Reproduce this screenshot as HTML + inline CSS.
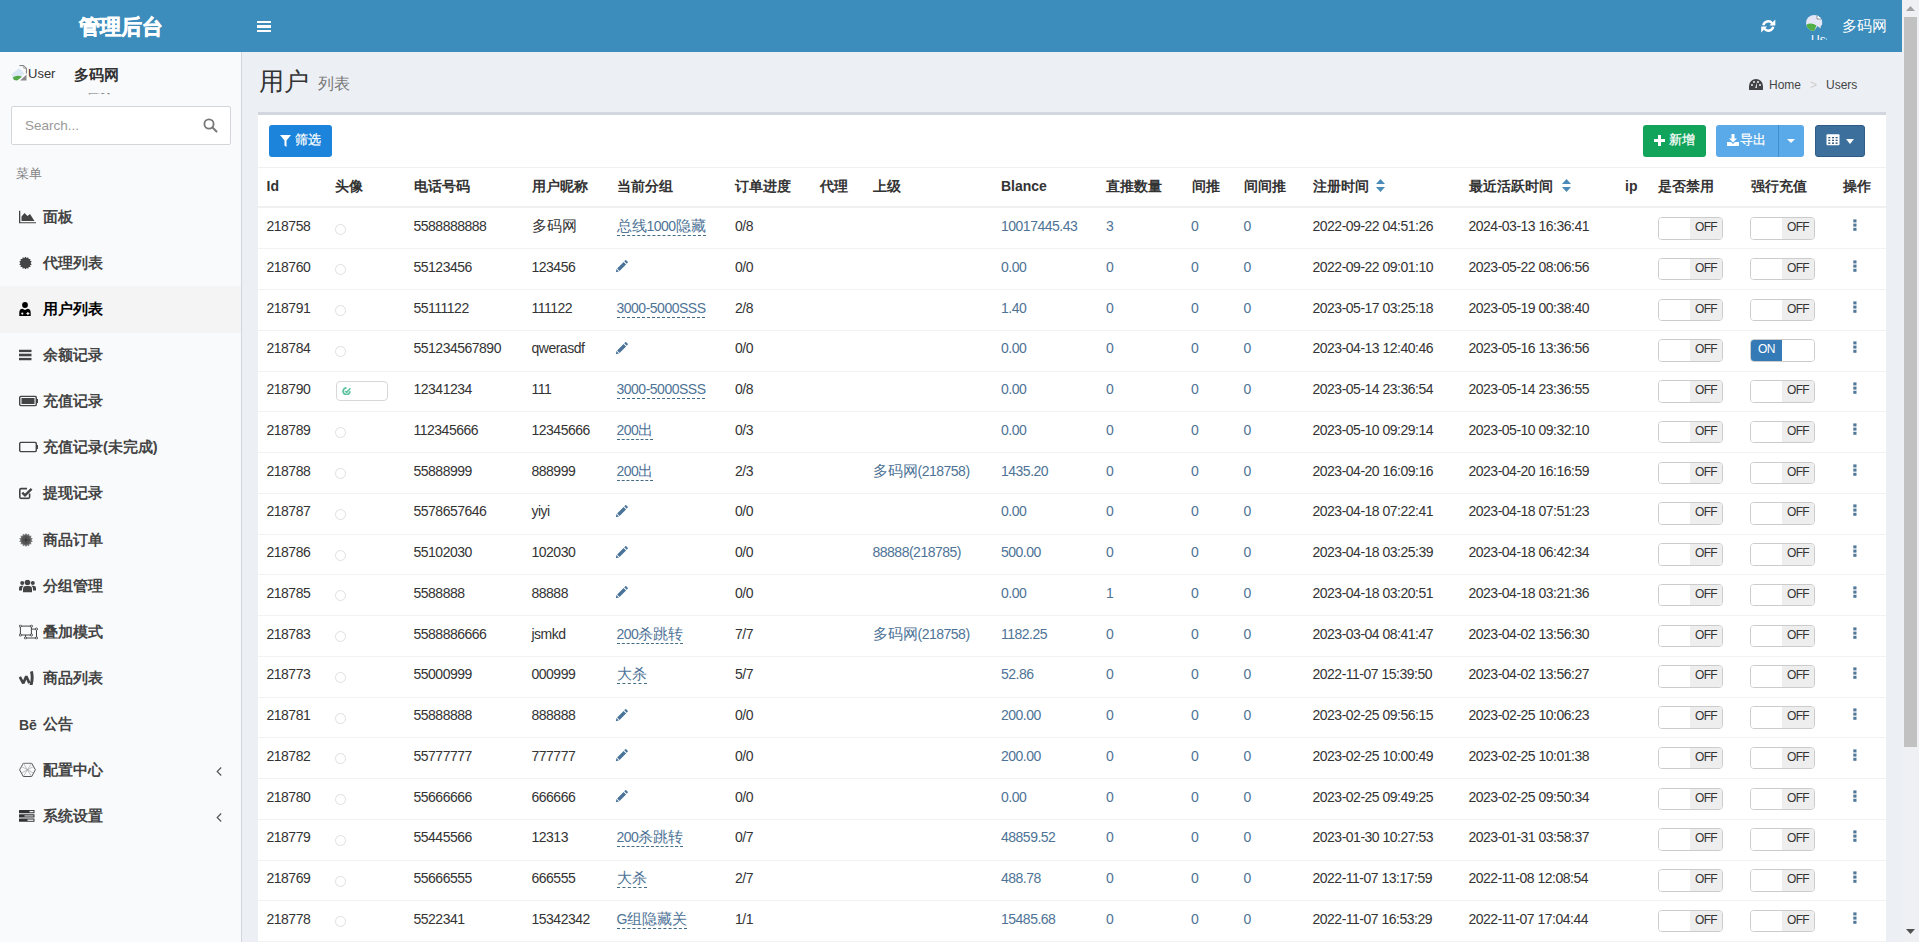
<!DOCTYPE html>
<html><head><meta charset="utf-8"><title>用户列表</title>
<style>
*{box-sizing:border-box;margin:0;padding:0}
html,body{width:1919px;height:942px;overflow:hidden}
body{position:relative;background:#ecf0f5;font-family:"Liberation Sans",sans-serif;color:#333;font-size:13px}
.abs,.t,.th,.mi,.micon,.mtxt,.sw,.dots,.avc,.avb,.rb,.sort,.marr,.mact{position:absolute}
#hdr{position:absolute;left:0;top:0;width:1902px;height:52px;background:#3c8dbc}
#logo{position:absolute;left:79px;top:13px;font-size:21px;font-weight:bold;color:#fff;letter-spacing:0px;line-height:28px;-webkit-text-stroke:0.6px #fff}
#burger{position:absolute;left:257px;top:21px;width:14px;height:11px}
#burger i{display:block;height:2.2px;background:#fff;margin-bottom:2.2px}
#refresh{position:absolute;left:1761px;top:18.5px;line-height:0}
#uimg{position:absolute;left:1805.5px;top:14.5px;width:17px;height:16px;line-height:0}
#uname{position:absolute;left:1842px;top:17px;font-size:14.5px;color:#fff;line-height:18px}
#sb{position:absolute;left:1902px;top:0;width:17px;height:942px;background:#eff0f3}
#thumb{position:absolute;left:1904px;top:17px;width:13px;height:730px;background:#c1c1c1}
#side{position:absolute;left:0;top:52px;width:242px;height:890px;background:#f9fafc;border-right:1px solid #d2d6de}
#u1{position:absolute;left:28px;top:66px;font-size:13px;color:#333;line-height:16px}
#u2{position:absolute;left:73.5px;top:66.5px;font-size:15px;font-weight:bold;color:#333;line-height:16px}
#search{position:absolute;left:11px;top:106px;width:220px;height:39px;background:#fff;border:1px solid #d4d6d9;border-radius:2px}
#search span{position:absolute;left:13px;top:11px;font-size:13.5px;color:#999;line-height:16px}
#search svg{position:absolute;left:191px;top:11px}
#menuh{position:absolute;left:16px;top:166px;font-size:12.5px;color:#848484;line-height:16px}
.mact{left:0;width:241px;height:47px;background:#f4f4f5}
.micon{left:19px;transform:translateY(-50%);color:#444;line-height:0}
.mtxt{left:43px;font-size:14.5px;font-weight:bold;color:#444;line-height:18px;white-space:nowrap}
.mi.act{color:#000}
.marr{left:215.5px}
.be{font-size:14px;font-weight:bold;line-height:14px;display:inline-block;transform:translateY(1px)}
#title{position:absolute;left:258.5px;top:65.5px;font-size:25px;font-weight:300;color:#333;line-height:30px}
#subt{position:absolute;left:318px;top:75px;font-size:16px;font-weight:300;color:#777;line-height:18px}
#bc{position:absolute;left:1749px;top:77px;font-size:12px;color:#444;line-height:16px;white-space:nowrap}
#box{position:absolute;left:258px;top:112px;width:1628px;height:830px;background:#fff;border-top:3px solid #d2d6de}
.btn{position:absolute;top:125px;height:32px;border-radius:3px;color:#fff;font-size:13px;line-height:30px}
.btn span{-webkit-text-stroke:0.25px #fff}
#bfilter{left:269px;width:63px;background:#1c84da}
#badd{left:1643px;width:63px;background:#11a45a}
#bexp{left:1716px;width:88px;background:#5aa9e8}
#bexp .div{position:absolute;left:62px;top:0;width:1px;height:32px;background:#3f8fd0}
#bcol{left:1815px;width:50px;background:#3d6f9c;border:1px solid #2f5b84}
#tline{position:absolute;left:258px;top:167px;width:1628px;height:1px;background:#f0f0f0}
#hline{position:absolute;left:258px;top:206px;width:1628px;height:2px;background:#f0f0f0}
.th{top:177px;font-size:14.2px;font-weight:bold;color:#333;line-height:18px;white-space:nowrap}
.th.lat{font-size:14px}
.sort{top:179px;line-height:0}
.rb{left:258px;width:1628px;height:1px;background:#f2f2f2}
.t{font-size:14px;letter-spacing:-0.5px;color:#333;line-height:16px;white-space:nowrap}
.lk{color:#4e7396}
.ed{border-bottom:1px dashed #456b85;padding-bottom:1px}
.avc{width:11px;height:11px;border:1px solid #e0e0e0;border-radius:50%}
.avb{width:52px;height:20px;border:1px solid #d8d8d8;border-radius:4px}
.avg{position:absolute;left:6px;top:5px;width:8px;height:7px;border-radius:50%;background:#5ec5a0}
.sw{width:64.5px;height:22.5px;border:1px solid #ccc;border-radius:4px;overflow:hidden;background:#fff}
.swl{position:absolute;left:0;top:0;width:31px;height:21px;background:#fff}
.swoff{position:absolute;left:31px;top:0;width:32px;height:21px;background:#eee;color:#333;font-size:12px;letter-spacing:-0.7px;line-height:19px;text-align:center;padding-left:0}
.swon{position:absolute;left:0;top:0;width:31px;height:21px;background:#337ab7;color:#fff;font-size:12px;letter-spacing:-0.5px;line-height:19px;text-align:center}
.swr{position:absolute;left:31px;top:0;width:32px;height:21px;background:#fff}
.dots{width:4px;height:12px;line-height:0}
.dots i{display:block;width:3.5px;height:3px;background:#52789a;margin-bottom:1.5px}
.pen{display:block}
.cj{letter-spacing:0;font-size:15px}
</style></head><body>
<div id="hdr"></div>
<div id="logo">管理后台</div>
<div id="burger"><i></i><i></i><i></i></div>
<div id="refresh"><svg width="14.5" height="14" viewBox="0 0 14.5 14"><path d="M2.3 6.3 A5 5 0 0 1 11.1 4.2" stroke="#fff" stroke-width="2.4" fill="none"/><path d="M14.3 0.6 V6.5 H8.4 Z" fill="#fff"/><path d="M12.2 7.7 A5 5 0 0 1 3.4 9.8" stroke="#fff" stroke-width="2.4" fill="none"/><path d="M0.2 13.4 V7.5 H6.1 Z" fill="#fff"/></svg></div>
<div id="uimg"><svg width="17" height="16" viewBox="0 0 17 16"><defs><clipPath id="cc"><ellipse cx="8.2" cy="8" rx="8.2" ry="8"/></clipPath></defs><g clip-path="url(#cc)"><path d="M0 0 H11 L16.5 4 V9.5 L13 12.5 L11.5 11 L8 16 H0 Z" fill="#e4e6f6"/><path d="M11 0 L11 4 L16.5 4 Z" fill="#fff"/><path d="M11 0.5 V4 H15" fill="none" stroke="#555" stroke-width="0.6"/><path d="M0 16 V10 Q5 7 10.5 10.5 L8 16 Z" fill="#4fae45"/><path d="M13 12 L15 11 L15 14 Z" fill="#ddd"/></g></svg></div>
<div class="abs" style="left:1811px;top:35px;width:16px;height:5px;overflow:hidden"><div style="font-size:12px;color:#fff;line-height:12px;margin-top:-1px">Use</div></div>
<div id="uname">多码网</div>
<div id="sb"><svg style="position:absolute;left:4px;top:6px" width="9" height="5" viewBox="0 0 9 5"><path d="M4.5 0 L9 5 H0Z" fill="#a3a3a3"/></svg><svg style="position:absolute;left:4px;top:929px" width="9" height="5" viewBox="0 0 9 5"><path d="M0 0 H9 L4.5 5Z" fill="#505050"/></svg></div>
<div id="thumb"></div>
<div id="side"></div>
<div class="abs" style="left:11px;top:65px;line-height:0"><svg width="16" height="16" viewBox="0 0 16 16"><path d="M8.5 0.6 H12.8 L15.4 3.2 V8.5" fill="none" stroke="#777" stroke-width="1"/><path d="M12.8 0.6 V3.2 H15.4" fill="none" stroke="#888" stroke-width="0.8"/><path d="M0.4 9.2 L8.2 3.2 L13.6 8.6 L6 15.6 L2 14.5 Z" fill="#dce8f5"/><path d="M1.8 12.5 Q6 9.2 11 11.8 L6.2 15.6 L3 15 Z" fill="#55a846"/><path d="M9.2 15.5 L15.5 9.5 V15.5 Z" fill="#8a8a8a"/></svg></div>
<div id="u1">User</div>
<div id="u2">多码网</div>
<div class="abs" style="left:75px;top:93px;width:40px;height:2px;overflow:hidden"><div style="font-size:12px;color:#777;line-height:12px;margin-top:-10px">● 在线</div></div>
<div id="search"><span>Search...</span><svg width="15" height="15" viewBox="0 0 15 15"><circle cx="6" cy="6" r="4.6" fill="none" stroke="#777" stroke-width="1.8"/><path d="M9.4 9.4 L13.5 13.5" stroke="#777" stroke-width="2" stroke-linecap="round"/></svg></div>
<div id="menuh">菜单</div>
<div class="micon mi" style="top:216.50px"><svg width="17" height="13" viewBox="0 0 17 13"><path d="M0 0h1.3v11.7H17V13H0Z M2.5 10.5 L2.5 6 L5.5 2.5 L8.5 5.5 L11 3.5 L15.5 10.5 Z" fill="currentColor"/></svg></div><div class="mtxt mi" style="top:207.50px">面板</div><div class="micon mi" style="top:262.65px"><svg width="13" height="13" viewBox="0 0 24 24"><path d="M12.00 0.00 L14.07 2.93 L17.21 1.19 L17.80 4.73 L21.38 4.52 L20.38 7.96 L23.70 9.33 L21.30 12.00 L23.70 14.67 L20.38 16.04 L21.38 19.48 L17.80 19.27 L17.21 22.81 L14.07 21.07 L12.00 24.00 L9.93 21.07 L6.79 22.81 L6.20 19.27 L2.62 19.48 L3.62 16.04 L0.30 14.67 L2.70 12.00 L0.30 9.33 L3.62 7.96 L2.62 4.52 L6.20 4.73 L6.79 1.19 L9.93 2.93 Z" fill="currentColor"/></svg></div><div class="mtxt mi" style="top:253.65px">代理列表</div><div class="mact" style="top:286.30px"></div><div class="micon mi act" style="top:308.80px"><svg width="12" height="14" viewBox="0 0 12 14"><circle cx="6" cy="3" r="2.9" fill="currentColor"/><path d="M0.3 14 V10.8 Q0.3 7 3.5 6.8 L6 8 L8.5 6.8 Q11.7 7 11.7 10.8 V14 Z" fill="currentColor"/><circle cx="3.3" cy="11.6" r="1.1" fill="#f4f4f5"/><rect x="7.4" y="11" width="3" height="1.1" fill="#f4f4f5"/><rect x="8.35" y="10" width="1.1" height="3.1" fill="#f4f4f5"/></svg></div><div class="mtxt mi act" style="top:299.80px">用户列表</div><div class="micon mi" style="top:354.95px"><svg width="13" height="11" viewBox="0 0 13 11"><rect x="0" y="0" width="12.5" height="2.6" fill="currentColor"/><rect x="0" y="4.2" width="12.5" height="2.6" fill="currentColor"/><rect x="0" y="8.4" width="12.5" height="2.6" fill="currentColor"/></svg></div><div class="mtxt mi" style="top:345.95px">余额记录</div><div class="micon mi" style="top:401.10px"><svg width="19" height="11" viewBox="0 0 19 11"><rect x="0.7" y="0.7" width="16.6" height="9.6" rx="1.5" fill="none" stroke="currentColor" stroke-width="1.4"/><rect x="2.5" y="2.5" width="13" height="6" fill="currentColor"/><rect x="17.5" y="3.5" width="1.5" height="4" fill="currentColor"/></svg></div><div class="mtxt mi" style="top:392.10px">充值记录</div><div class="micon mi" style="top:447.25px"><svg width="19" height="11" viewBox="0 0 19 11"><rect x="0.7" y="0.7" width="16.6" height="9.6" rx="1.5" fill="none" stroke="currentColor" stroke-width="1.4"/><rect x="17.5" y="3.5" width="1.5" height="4" fill="currentColor"/></svg></div><div class="mtxt mi" style="top:438.25px">充值记录(未完成)</div><div class="micon mi" style="top:493.40px"><svg width="14" height="13" viewBox="0 0 14 13"><path d="M10.6 7 V10.6 Q10.6 11.9 9.3 11.9 H2.1 Q0.8 11.9 0.8 10.6 V3.4 Q0.8 2.1 2.1 2.1 H8" fill="none" stroke="currentColor" stroke-width="1.6"/><path d="M3.3 6.2 L6 8.9 L12.6 2.3" fill="none" stroke="currentColor" stroke-width="2.4"/></svg></div><div class="mtxt mi" style="top:484.40px">提现记录</div><div class="micon mi" style="top:539.55px"><svg width="14" height="14" viewBox="0 0 24 24"><path d="M12.00 0.00 L14.07 2.93 L17.21 1.19 L17.80 4.73 L21.38 4.52 L20.38 7.96 L23.70 9.33 L21.30 12.00 L23.70 14.67 L20.38 16.04 L21.38 19.48 L17.80 19.27 L17.21 22.81 L14.07 21.07 L12.00 24.00 L9.93 21.07 L6.79 22.81 L6.20 19.27 L2.62 19.48 L3.62 16.04 L0.30 14.67 L2.70 12.00 L0.30 9.33 L3.62 7.96 L2.62 4.52 L6.20 4.73 L6.79 1.19 L9.93 2.93 Z" fill="#777"/><circle cx="12" cy="12" r="8" fill="#555"/><path d="M12 5 L13 11 L19 12 L13 13 L12 19 L11 13 L5 12 L11 11 Z" fill="#333"/></svg></div><div class="mtxt mi" style="top:530.55px">商品订单</div><div class="micon mi" style="top:585.70px"><svg width="17" height="13" viewBox="0 0 17 13"><circle cx="8.5" cy="3" r="2.8" fill="currentColor"/><circle cx="3.2" cy="3.6" r="2" fill="currentColor"/><circle cx="13.8" cy="3.6" r="2" fill="currentColor"/><path d="M4 13 V9.5 Q4 6.5 7 6.5 H10 Q13 6.5 13 9.5 V13 Z" fill="currentColor"/><path d="M0 11 V8.5 Q0 6.2 2.5 6.2 H4.5 Q3 7.5 3 9.5 V11 Z M17 11 V8.5 Q17 6.2 14.5 6.2 H12.5 Q14 7.5 14 9.5 V11 Z" fill="currentColor"/></svg></div><div class="mtxt mi" style="top:576.70px">分组管理</div><div class="micon mi" style="top:631.85px"><svg width="19" height="15" viewBox="0 0 19 15"><path d="M1.4 1.6 H12.4 V10.5 H1.4 Z" fill="none" stroke="currentColor" stroke-width="1"/><path d="M17.5 4.6 V13.5 H6.5 V10.5 M12.4 4.6 H17.5" fill="none" stroke="currentColor" stroke-width="1"/><g fill="#f9fafc" stroke="currentColor" stroke-width="0.9"><circle cx="1.4" cy="1.6" r="1.1"/><circle cx="12.4" cy="1.6" r="1.1"/><circle cx="1.4" cy="10.5" r="1.1"/><circle cx="12.4" cy="10.5" r="1.1"/><circle cx="17.5" cy="4.6" r="1.1"/><circle cx="17.5" cy="13.5" r="1.1"/><circle cx="6.5" cy="13.5" r="1.1"/></g></svg></div><div class="mtxt mi" style="top:622.85px">叠加模式</div><div class="micon mi" style="top:678.00px"><svg width="15" height="15" viewBox="0 0 15 15"><path d="M0.8 6.3 L4.3 12.8 L7.3 5.8 L10.4 12.8" fill="none" stroke="currentColor" stroke-width="2.7" stroke-linejoin="bevel"/><path d="M11 1.2 L13.8 0.5 Q15.6 7 13.6 14.5 L10.6 14.5 Q12.6 7.5 11 1.2 Z" fill="currentColor"/></svg></div><div class="mtxt mi" style="top:669.00px">商品列表</div><div class="micon mi" style="top:724.15px"><span class="be">Bē</span></div><div class="mtxt mi" style="top:715.15px">公告</div><div class="micon mi" style="top:770.30px"><svg width="17" height="15" viewBox="0 0 17 15"><path d="M4.3 0.7 H12.7 L16.4 7.3 L12.7 14 H4.3 L0.6 7.3 Z" fill="none" stroke="#555" stroke-width="1"/><path d="M4.3 0.7 L12.7 14 M12.7 0.7 L4.3 14 M0.6 7.3 L4.3 0.7 M2.5 4 L14.5 10.6 M14.5 4 L2.5 10.6" fill="none" stroke="#999" stroke-width="0.6"/></svg></div><div class="mtxt mi" style="top:761.30px">配置中心</div><div class="marr" style="top:766.80px;line-height:0"><svg width="6" height="9" viewBox="0 0 6 9"><path d="M5.2 0.5 L1.2 4.5 L5.2 8.5" fill="none" stroke="#555" stroke-width="1.2"/></svg></div><div class="micon mi" style="top:816.45px"><svg width="16" height="12" viewBox="0 0 16 12"><rect x="0" y="0" width="15.5" height="3.2" rx="0.5" fill="#333"/><rect x="0" y="4.3" width="15.5" height="3.2" rx="0.5" fill="#333"/><rect x="0" y="8.6" width="15.5" height="3.2" rx="0.5" fill="#333"/><rect x="10.5" y="0.9" width="4" height="1.4" fill="#eee"/><rect x="5.5" y="5.2" width="9" height="1.4" fill="#bbb"/><rect x="8.5" y="9.5" width="6" height="1.4" fill="#eee"/></svg></div><div class="mtxt mi" style="top:807.45px">系统设置</div><div class="marr" style="top:812.95px;line-height:0"><svg width="6" height="9" viewBox="0 0 6 9"><path d="M5.2 0.5 L1.2 4.5 L5.2 8.5" fill="none" stroke="#555" stroke-width="1.2"/></svg></div>
<div id="title">用户</div>
<div id="subt">列表</div>
<div id="bc"><svg style="vertical-align:-1px;margin-right:6px" width="14" height="11" viewBox="0 0 14 11"><path d="M7 0 A7 7 0 0 0 0 7 V11 H14 V7 A7 7 0 0 0 7 0 Z" fill="#444"/><circle cx="3" cy="6" r="1" fill="#ecf0f5"/><circle cx="5" cy="3" r="1" fill="#ecf0f5"/><circle cx="9" cy="3" r="1" fill="#ecf0f5"/><circle cx="11" cy="6" r="1" fill="#ecf0f5"/><path d="M6.2 9 L8 3.5 L7.8 9 Z" fill="#ecf0f5"/></svg>Home<span style="color:#ccc;margin:0 9px">&gt;</span>Users</div>
<div id="box"></div>
<div id="bfilter" class="btn"><svg style="position:absolute;left:11px;top:10px" width="11" height="12" viewBox="0 0 11 12"><path d="M0 0 H11 L6.5 5.5 V12 L4.5 10.5 V5.5 Z" fill="#fff"/></svg><span style="position:absolute;left:26px;top:0">筛选</span></div>
<div id="badd" class="btn"><svg style="position:absolute;left:11px;top:10px" width="11" height="11" viewBox="0 0 11 11"><path d="M4 0 H7 V4 H11 V7 H7 V11 H4 V7 H0 V4 H4 Z" fill="#fff"/></svg><span style="position:absolute;left:26px;top:0">新增</span></div>
<div id="bexp" class="btn"><svg style="position:absolute;left:11px;top:9px" width="12" height="12" viewBox="0 0 12 12"><path d="M4.5 0 H7.5 V4.5 H10 L6 8.5 L2 4.5 H4.5 Z M0 8 H4 L6 10 L8 8 H12 V12 H0 Z" fill="#fff"/></svg><span style="position:absolute;left:24px;top:0">导出</span><div class="div"></div><svg style="position:absolute;left:71px;top:14px" width="8" height="4" viewBox="0 0 8 4"><path d="M0 0 H8 L4 4Z" fill="#fff"/></svg></div>
<div id="bcol" class="btn"><svg style="position:absolute;left:10px;top:7.5px" width="14" height="12" viewBox="0 0 14 12"><rect x="0.5" y="0.3" width="13" height="11" rx="1" fill="#fff"/><rect x="2.3" y="3" width="2" height="1.3" fill="#35597a"/><rect x="6" y="3" width="2" height="1.3" fill="#35597a"/><rect x="9.6" y="3" width="2" height="1.3" fill="#35597a"/><rect x="2.3" y="5.7" width="2" height="1.3" fill="#35597a"/><rect x="6" y="5.7" width="2" height="1.3" fill="#35597a"/><rect x="9.6" y="5.7" width="2" height="1.3" fill="#35597a"/><rect x="2.3" y="8.4" width="2" height="1.5" fill="#35597a"/><rect x="6" y="8.4" width="2" height="1.5" fill="#35597a"/><rect x="9.6" y="8.4" width="2" height="1.5" fill="#35597a"/></svg><svg style="position:absolute;left:30px;top:13px" width="8" height="5" viewBox="0 0 8 5"><path d="M0 0 H8 L4 5Z" fill="#fff"/></svg></div>
<div id="tline"></div>
<div class="th lat" style="left:266.5px">Id</div><div class="th " style="left:335px">头像</div><div class="th " style="left:413.5px">电话号码</div><div class="th " style="left:531.5px">用户昵称</div><div class="th " style="left:616.5px">当前分组</div><div class="th " style="left:735px">订单进度</div><div class="th " style="left:820px">代理</div><div class="th " style="left:872.5px">上级</div><div class="th lat" style="left:1001px">Blance</div><div class="th " style="left:1106px">直推数量</div><div class="th " style="left:1191.5px">间推</div><div class="th " style="left:1243.5px">间间推</div><div class="th " style="left:1312.5px">注册时间</div><div class="th " style="left:1468.5px">最近活跃时间</div><div class="th lat" style="left:1625px">ip</div><div class="th " style="left:1658px">是否禁用</div><div class="th " style="left:1750.5px">强行充值</div><div class="th " style="left:1842.5px">操作</div><div class="sort" style="left:1376px"><svg width="9" height="13" viewBox="0 0 9 13"><path d="M4.5 0 L9 5 H0 Z M0 8 H9 L4.5 13 Z" fill="#4a8ab8"/></svg></div><div class="sort" style="left:1561.5px"><svg width="9" height="13" viewBox="0 0 9 13"><path d="M4.5 0 L9 5 H0 Z M0 8 H9 L4.5 13 Z" fill="#4a8ab8"/></svg></div>
<div id="hline"></div>
<div class="rb" style="top:248.25px"></div>
<div class="t" style="left:266.5px;top:218.00px">218758</div>
<div class="avc" style="left:335px;top:223.50px"></div>
<div class="t" style="left:413.5px;top:218.00px">5588888888</div>
<div class="t" style="left:531.5px;top:218.00px"><span class="cj">多码网</span></div>
<div class="t lk" style="left:616.5px;top:218.00px"><span class="ed"><span class="cj">总线</span>1000<span class="cj">隐藏</span></span></div>
<div class="t" style="left:735px;top:218.00px">0/8</div>
<div class="t lk" style="left:1001px;top:218.00px">10017445.43</div>
<div class="t lk" style="left:1106px;top:218.00px">3</div>
<div class="t lk" style="left:1191px;top:218.00px">0</div>
<div class="t lk" style="left:1243.5px;top:218.00px">0</div>
<div class="t" style="left:1312.5px;top:218.00px">2022-09-22 04:51:26</div>
<div class="t" style="left:1468.5px;top:218.00px">2024-03-13 16:36:41</div>
<div class="sw" style="left:1658px;top:217.00px"><span class="swl"></span><span class="swoff">OFF</span></div>
<div class="sw" style="left:1750px;top:217.00px"><span class="swl"></span><span class="swoff">OFF</span></div>
<div class="dots" style="left:1852.5px;top:219.00px"><svg width="4" height="12" viewBox="0 0 4 12"><rect x="0.3" y="0.4" width="3.2" height="3" fill="#52789a"/><rect x="0.3" y="4.6" width="3.2" height="3" fill="#52789a"/><rect x="0.3" y="8.8" width="3.2" height="3" fill="#52789a"/></svg></div><div class="rb" style="top:289.00px"></div>
<div class="t" style="left:266.5px;top:258.75px">218760</div>
<div class="avc" style="left:335px;top:264.25px"></div>
<div class="t" style="left:413.5px;top:258.75px">55123456</div>
<div class="t" style="left:531.5px;top:258.75px">123456</div>
<div class="t" style="left:615.0px;top:260.25px"><svg class="pen" width="13" height="13" viewBox="0 0 16 16"><path d="M1 15 L1.8 11.2 L4.8 14.2 Z M2.6 10.4 L10.6 2.4 L13.6 5.4 L5.6 13.4 Z M11.4 1.6 L12.6 0.4 Q13.2 -0.1 13.8 0.4 L15.6 2.2 Q16.1 2.8 15.6 3.4 L14.4 4.6 Z" fill="#4a7399"/></svg></div>
<div class="t" style="left:735px;top:258.75px">0/0</div>
<div class="t lk" style="left:1001px;top:258.75px">0.00</div>
<div class="t lk" style="left:1106px;top:258.75px">0</div>
<div class="t lk" style="left:1191px;top:258.75px">0</div>
<div class="t lk" style="left:1243.5px;top:258.75px">0</div>
<div class="t" style="left:1312.5px;top:258.75px">2022-09-22 09:01:10</div>
<div class="t" style="left:1468.5px;top:258.75px">2023-05-22 08:06:56</div>
<div class="sw" style="left:1658px;top:257.75px"><span class="swl"></span><span class="swoff">OFF</span></div>
<div class="sw" style="left:1750px;top:257.75px"><span class="swl"></span><span class="swoff">OFF</span></div>
<div class="dots" style="left:1852.5px;top:259.75px"><svg width="4" height="12" viewBox="0 0 4 12"><rect x="0.3" y="0.4" width="3.2" height="3" fill="#52789a"/><rect x="0.3" y="4.6" width="3.2" height="3" fill="#52789a"/><rect x="0.3" y="8.8" width="3.2" height="3" fill="#52789a"/></svg></div><div class="rb" style="top:329.75px"></div>
<div class="t" style="left:266.5px;top:299.50px">218791</div>
<div class="avc" style="left:335px;top:305.00px"></div>
<div class="t" style="left:413.5px;top:299.50px">55111122</div>
<div class="t" style="left:531.5px;top:299.50px">111122</div>
<div class="t lk" style="left:616.5px;top:299.50px"><span class="ed">3000-5000SSS</span></div>
<div class="t" style="left:735px;top:299.50px">2/8</div>
<div class="t lk" style="left:1001px;top:299.50px">1.40</div>
<div class="t lk" style="left:1106px;top:299.50px">0</div>
<div class="t lk" style="left:1191px;top:299.50px">0</div>
<div class="t lk" style="left:1243.5px;top:299.50px">0</div>
<div class="t" style="left:1312.5px;top:299.50px">2023-05-17 03:25:18</div>
<div class="t" style="left:1468.5px;top:299.50px">2023-05-19 00:38:40</div>
<div class="sw" style="left:1658px;top:298.50px"><span class="swl"></span><span class="swoff">OFF</span></div>
<div class="sw" style="left:1750px;top:298.50px"><span class="swl"></span><span class="swoff">OFF</span></div>
<div class="dots" style="left:1852.5px;top:300.50px"><svg width="4" height="12" viewBox="0 0 4 12"><rect x="0.3" y="0.4" width="3.2" height="3" fill="#52789a"/><rect x="0.3" y="4.6" width="3.2" height="3" fill="#52789a"/><rect x="0.3" y="8.8" width="3.2" height="3" fill="#52789a"/></svg></div><div class="rb" style="top:370.50px"></div>
<div class="t" style="left:266.5px;top:340.25px">218784</div>
<div class="avc" style="left:335px;top:345.75px"></div>
<div class="t" style="left:413.5px;top:340.25px">551234567890</div>
<div class="t" style="left:531.5px;top:340.25px">qwerasdf</div>
<div class="t" style="left:615.0px;top:341.75px"><svg class="pen" width="13" height="13" viewBox="0 0 16 16"><path d="M1 15 L1.8 11.2 L4.8 14.2 Z M2.6 10.4 L10.6 2.4 L13.6 5.4 L5.6 13.4 Z M11.4 1.6 L12.6 0.4 Q13.2 -0.1 13.8 0.4 L15.6 2.2 Q16.1 2.8 15.6 3.4 L14.4 4.6 Z" fill="#4a7399"/></svg></div>
<div class="t" style="left:735px;top:340.25px">0/0</div>
<div class="t lk" style="left:1001px;top:340.25px">0.00</div>
<div class="t lk" style="left:1106px;top:340.25px">0</div>
<div class="t lk" style="left:1191px;top:340.25px">0</div>
<div class="t lk" style="left:1243.5px;top:340.25px">0</div>
<div class="t" style="left:1312.5px;top:340.25px">2023-04-13 12:40:46</div>
<div class="t" style="left:1468.5px;top:340.25px">2023-05-16 13:36:56</div>
<div class="sw" style="left:1658px;top:339.25px"><span class="swl"></span><span class="swoff">OFF</span></div>
<div class="sw" style="left:1750px;top:339.25px"><span class="swon">ON</span><span class="swr"></span></div>
<div class="dots" style="left:1852.5px;top:341.25px"><svg width="4" height="12" viewBox="0 0 4 12"><rect x="0.3" y="0.4" width="3.2" height="3" fill="#52789a"/><rect x="0.3" y="4.6" width="3.2" height="3" fill="#52789a"/><rect x="0.3" y="8.8" width="3.2" height="3" fill="#52789a"/></svg></div><div class="rb" style="top:411.25px"></div>
<div class="t" style="left:266.5px;top:381.00px">218790</div>
<div class="avb" style="left:335.5px;top:380.50px"><svg style="position:absolute;left:5.5px;top:5px" width="9" height="8" viewBox="0 0 9 8"><path d="M4.5 0.8 A3.4 3.4 0 1 0 7.9 4.2" fill="none" stroke="#5cc39e" stroke-width="1.8"/><path d="M3 4 L4.6 5.4 L8.5 1.2" fill="none" stroke="#5cc39e" stroke-width="1.6"/></svg></div>
<div class="t" style="left:413.5px;top:381.00px">12341234</div>
<div class="t" style="left:531.5px;top:381.00px">111</div>
<div class="t lk" style="left:616.5px;top:381.00px"><span class="ed">3000-5000SSS</span></div>
<div class="t" style="left:735px;top:381.00px">0/8</div>
<div class="t lk" style="left:1001px;top:381.00px">0.00</div>
<div class="t lk" style="left:1106px;top:381.00px">0</div>
<div class="t lk" style="left:1191px;top:381.00px">0</div>
<div class="t lk" style="left:1243.5px;top:381.00px">0</div>
<div class="t" style="left:1312.5px;top:381.00px">2023-05-14 23:36:54</div>
<div class="t" style="left:1468.5px;top:381.00px">2023-05-14 23:36:55</div>
<div class="sw" style="left:1658px;top:380.00px"><span class="swl"></span><span class="swoff">OFF</span></div>
<div class="sw" style="left:1750px;top:380.00px"><span class="swl"></span><span class="swoff">OFF</span></div>
<div class="dots" style="left:1852.5px;top:382.00px"><svg width="4" height="12" viewBox="0 0 4 12"><rect x="0.3" y="0.4" width="3.2" height="3" fill="#52789a"/><rect x="0.3" y="4.6" width="3.2" height="3" fill="#52789a"/><rect x="0.3" y="8.8" width="3.2" height="3" fill="#52789a"/></svg></div><div class="rb" style="top:452.00px"></div>
<div class="t" style="left:266.5px;top:421.75px">218789</div>
<div class="avc" style="left:335px;top:427.25px"></div>
<div class="t" style="left:413.5px;top:421.75px">112345666</div>
<div class="t" style="left:531.5px;top:421.75px">12345666</div>
<div class="t lk" style="left:616.5px;top:421.75px"><span class="ed">200<span class="cj">出</span></span></div>
<div class="t" style="left:735px;top:421.75px">0/3</div>
<div class="t lk" style="left:1001px;top:421.75px">0.00</div>
<div class="t lk" style="left:1106px;top:421.75px">0</div>
<div class="t lk" style="left:1191px;top:421.75px">0</div>
<div class="t lk" style="left:1243.5px;top:421.75px">0</div>
<div class="t" style="left:1312.5px;top:421.75px">2023-05-10 09:29:14</div>
<div class="t" style="left:1468.5px;top:421.75px">2023-05-10 09:32:10</div>
<div class="sw" style="left:1658px;top:420.75px"><span class="swl"></span><span class="swoff">OFF</span></div>
<div class="sw" style="left:1750px;top:420.75px"><span class="swl"></span><span class="swoff">OFF</span></div>
<div class="dots" style="left:1852.5px;top:422.75px"><svg width="4" height="12" viewBox="0 0 4 12"><rect x="0.3" y="0.4" width="3.2" height="3" fill="#52789a"/><rect x="0.3" y="4.6" width="3.2" height="3" fill="#52789a"/><rect x="0.3" y="8.8" width="3.2" height="3" fill="#52789a"/></svg></div><div class="rb" style="top:492.75px"></div>
<div class="t" style="left:266.5px;top:462.50px">218788</div>
<div class="avc" style="left:335px;top:468.00px"></div>
<div class="t" style="left:413.5px;top:462.50px">55888999</div>
<div class="t" style="left:531.5px;top:462.50px">888999</div>
<div class="t lk" style="left:616.5px;top:462.50px"><span class="ed">200<span class="cj">出</span></span></div>
<div class="t" style="left:735px;top:462.50px">2/3</div>
<div class="t lk" style="left:872.5px;top:462.50px"><span class="cj">多码网</span>(218758)</div>
<div class="t lk" style="left:1001px;top:462.50px">1435.20</div>
<div class="t lk" style="left:1106px;top:462.50px">0</div>
<div class="t lk" style="left:1191px;top:462.50px">0</div>
<div class="t lk" style="left:1243.5px;top:462.50px">0</div>
<div class="t" style="left:1312.5px;top:462.50px">2023-04-20 16:09:16</div>
<div class="t" style="left:1468.5px;top:462.50px">2023-04-20 16:16:59</div>
<div class="sw" style="left:1658px;top:461.50px"><span class="swl"></span><span class="swoff">OFF</span></div>
<div class="sw" style="left:1750px;top:461.50px"><span class="swl"></span><span class="swoff">OFF</span></div>
<div class="dots" style="left:1852.5px;top:463.50px"><svg width="4" height="12" viewBox="0 0 4 12"><rect x="0.3" y="0.4" width="3.2" height="3" fill="#52789a"/><rect x="0.3" y="4.6" width="3.2" height="3" fill="#52789a"/><rect x="0.3" y="8.8" width="3.2" height="3" fill="#52789a"/></svg></div><div class="rb" style="top:533.50px"></div>
<div class="t" style="left:266.5px;top:503.25px">218787</div>
<div class="avc" style="left:335px;top:508.75px"></div>
<div class="t" style="left:413.5px;top:503.25px">5578657646</div>
<div class="t" style="left:531.5px;top:503.25px">yiyi</div>
<div class="t" style="left:615.0px;top:504.75px"><svg class="pen" width="13" height="13" viewBox="0 0 16 16"><path d="M1 15 L1.8 11.2 L4.8 14.2 Z M2.6 10.4 L10.6 2.4 L13.6 5.4 L5.6 13.4 Z M11.4 1.6 L12.6 0.4 Q13.2 -0.1 13.8 0.4 L15.6 2.2 Q16.1 2.8 15.6 3.4 L14.4 4.6 Z" fill="#4a7399"/></svg></div>
<div class="t" style="left:735px;top:503.25px">0/0</div>
<div class="t lk" style="left:1001px;top:503.25px">0.00</div>
<div class="t lk" style="left:1106px;top:503.25px">0</div>
<div class="t lk" style="left:1191px;top:503.25px">0</div>
<div class="t lk" style="left:1243.5px;top:503.25px">0</div>
<div class="t" style="left:1312.5px;top:503.25px">2023-04-18 07:22:41</div>
<div class="t" style="left:1468.5px;top:503.25px">2023-04-18 07:51:23</div>
<div class="sw" style="left:1658px;top:502.25px"><span class="swl"></span><span class="swoff">OFF</span></div>
<div class="sw" style="left:1750px;top:502.25px"><span class="swl"></span><span class="swoff">OFF</span></div>
<div class="dots" style="left:1852.5px;top:504.25px"><svg width="4" height="12" viewBox="0 0 4 12"><rect x="0.3" y="0.4" width="3.2" height="3" fill="#52789a"/><rect x="0.3" y="4.6" width="3.2" height="3" fill="#52789a"/><rect x="0.3" y="8.8" width="3.2" height="3" fill="#52789a"/></svg></div><div class="rb" style="top:574.25px"></div>
<div class="t" style="left:266.5px;top:544.00px">218786</div>
<div class="avc" style="left:335px;top:549.50px"></div>
<div class="t" style="left:413.5px;top:544.00px">55102030</div>
<div class="t" style="left:531.5px;top:544.00px">102030</div>
<div class="t" style="left:615.0px;top:545.50px"><svg class="pen" width="13" height="13" viewBox="0 0 16 16"><path d="M1 15 L1.8 11.2 L4.8 14.2 Z M2.6 10.4 L10.6 2.4 L13.6 5.4 L5.6 13.4 Z M11.4 1.6 L12.6 0.4 Q13.2 -0.1 13.8 0.4 L15.6 2.2 Q16.1 2.8 15.6 3.4 L14.4 4.6 Z" fill="#4a7399"/></svg></div>
<div class="t" style="left:735px;top:544.00px">0/0</div>
<div class="t lk" style="left:872.5px;top:544.00px">88888(218785)</div>
<div class="t lk" style="left:1001px;top:544.00px">500.00</div>
<div class="t lk" style="left:1106px;top:544.00px">0</div>
<div class="t lk" style="left:1191px;top:544.00px">0</div>
<div class="t lk" style="left:1243.5px;top:544.00px">0</div>
<div class="t" style="left:1312.5px;top:544.00px">2023-04-18 03:25:39</div>
<div class="t" style="left:1468.5px;top:544.00px">2023-04-18 06:42:34</div>
<div class="sw" style="left:1658px;top:543.00px"><span class="swl"></span><span class="swoff">OFF</span></div>
<div class="sw" style="left:1750px;top:543.00px"><span class="swl"></span><span class="swoff">OFF</span></div>
<div class="dots" style="left:1852.5px;top:545.00px"><svg width="4" height="12" viewBox="0 0 4 12"><rect x="0.3" y="0.4" width="3.2" height="3" fill="#52789a"/><rect x="0.3" y="4.6" width="3.2" height="3" fill="#52789a"/><rect x="0.3" y="8.8" width="3.2" height="3" fill="#52789a"/></svg></div><div class="rb" style="top:615.00px"></div>
<div class="t" style="left:266.5px;top:584.75px">218785</div>
<div class="avc" style="left:335px;top:590.25px"></div>
<div class="t" style="left:413.5px;top:584.75px">5588888</div>
<div class="t" style="left:531.5px;top:584.75px">88888</div>
<div class="t" style="left:615.0px;top:586.25px"><svg class="pen" width="13" height="13" viewBox="0 0 16 16"><path d="M1 15 L1.8 11.2 L4.8 14.2 Z M2.6 10.4 L10.6 2.4 L13.6 5.4 L5.6 13.4 Z M11.4 1.6 L12.6 0.4 Q13.2 -0.1 13.8 0.4 L15.6 2.2 Q16.1 2.8 15.6 3.4 L14.4 4.6 Z" fill="#4a7399"/></svg></div>
<div class="t" style="left:735px;top:584.75px">0/0</div>
<div class="t lk" style="left:1001px;top:584.75px">0.00</div>
<div class="t lk" style="left:1106px;top:584.75px">1</div>
<div class="t lk" style="left:1191px;top:584.75px">0</div>
<div class="t lk" style="left:1243.5px;top:584.75px">0</div>
<div class="t" style="left:1312.5px;top:584.75px">2023-04-18 03:20:51</div>
<div class="t" style="left:1468.5px;top:584.75px">2023-04-18 03:21:36</div>
<div class="sw" style="left:1658px;top:583.75px"><span class="swl"></span><span class="swoff">OFF</span></div>
<div class="sw" style="left:1750px;top:583.75px"><span class="swl"></span><span class="swoff">OFF</span></div>
<div class="dots" style="left:1852.5px;top:585.75px"><svg width="4" height="12" viewBox="0 0 4 12"><rect x="0.3" y="0.4" width="3.2" height="3" fill="#52789a"/><rect x="0.3" y="4.6" width="3.2" height="3" fill="#52789a"/><rect x="0.3" y="8.8" width="3.2" height="3" fill="#52789a"/></svg></div><div class="rb" style="top:655.75px"></div>
<div class="t" style="left:266.5px;top:625.50px">218783</div>
<div class="avc" style="left:335px;top:631.00px"></div>
<div class="t" style="left:413.5px;top:625.50px">5588886666</div>
<div class="t" style="left:531.5px;top:625.50px">jsmkd</div>
<div class="t lk" style="left:616.5px;top:625.50px"><span class="ed">200<span class="cj">杀跳转</span></span></div>
<div class="t" style="left:735px;top:625.50px">7/7</div>
<div class="t lk" style="left:872.5px;top:625.50px"><span class="cj">多码网</span>(218758)</div>
<div class="t lk" style="left:1001px;top:625.50px">1182.25</div>
<div class="t lk" style="left:1106px;top:625.50px">0</div>
<div class="t lk" style="left:1191px;top:625.50px">0</div>
<div class="t lk" style="left:1243.5px;top:625.50px">0</div>
<div class="t" style="left:1312.5px;top:625.50px">2023-03-04 08:41:47</div>
<div class="t" style="left:1468.5px;top:625.50px">2023-04-02 13:56:30</div>
<div class="sw" style="left:1658px;top:624.50px"><span class="swl"></span><span class="swoff">OFF</span></div>
<div class="sw" style="left:1750px;top:624.50px"><span class="swl"></span><span class="swoff">OFF</span></div>
<div class="dots" style="left:1852.5px;top:626.50px"><svg width="4" height="12" viewBox="0 0 4 12"><rect x="0.3" y="0.4" width="3.2" height="3" fill="#52789a"/><rect x="0.3" y="4.6" width="3.2" height="3" fill="#52789a"/><rect x="0.3" y="8.8" width="3.2" height="3" fill="#52789a"/></svg></div><div class="rb" style="top:696.50px"></div>
<div class="t" style="left:266.5px;top:666.25px">218773</div>
<div class="avc" style="left:335px;top:671.75px"></div>
<div class="t" style="left:413.5px;top:666.25px">55000999</div>
<div class="t" style="left:531.5px;top:666.25px">000999</div>
<div class="t lk" style="left:616.5px;top:666.25px"><span class="ed"><span class="cj">大杀</span></span></div>
<div class="t" style="left:735px;top:666.25px">5/7</div>
<div class="t lk" style="left:1001px;top:666.25px">52.86</div>
<div class="t lk" style="left:1106px;top:666.25px">0</div>
<div class="t lk" style="left:1191px;top:666.25px">0</div>
<div class="t lk" style="left:1243.5px;top:666.25px">0</div>
<div class="t" style="left:1312.5px;top:666.25px">2022-11-07 15:39:50</div>
<div class="t" style="left:1468.5px;top:666.25px">2023-04-02 13:56:27</div>
<div class="sw" style="left:1658px;top:665.25px"><span class="swl"></span><span class="swoff">OFF</span></div>
<div class="sw" style="left:1750px;top:665.25px"><span class="swl"></span><span class="swoff">OFF</span></div>
<div class="dots" style="left:1852.5px;top:667.25px"><svg width="4" height="12" viewBox="0 0 4 12"><rect x="0.3" y="0.4" width="3.2" height="3" fill="#52789a"/><rect x="0.3" y="4.6" width="3.2" height="3" fill="#52789a"/><rect x="0.3" y="8.8" width="3.2" height="3" fill="#52789a"/></svg></div><div class="rb" style="top:737.25px"></div>
<div class="t" style="left:266.5px;top:707.00px">218781</div>
<div class="avc" style="left:335px;top:712.50px"></div>
<div class="t" style="left:413.5px;top:707.00px">55888888</div>
<div class="t" style="left:531.5px;top:707.00px">888888</div>
<div class="t" style="left:615.0px;top:708.50px"><svg class="pen" width="13" height="13" viewBox="0 0 16 16"><path d="M1 15 L1.8 11.2 L4.8 14.2 Z M2.6 10.4 L10.6 2.4 L13.6 5.4 L5.6 13.4 Z M11.4 1.6 L12.6 0.4 Q13.2 -0.1 13.8 0.4 L15.6 2.2 Q16.1 2.8 15.6 3.4 L14.4 4.6 Z" fill="#4a7399"/></svg></div>
<div class="t" style="left:735px;top:707.00px">0/0</div>
<div class="t lk" style="left:1001px;top:707.00px">200.00</div>
<div class="t lk" style="left:1106px;top:707.00px">0</div>
<div class="t lk" style="left:1191px;top:707.00px">0</div>
<div class="t lk" style="left:1243.5px;top:707.00px">0</div>
<div class="t" style="left:1312.5px;top:707.00px">2023-02-25 09:56:15</div>
<div class="t" style="left:1468.5px;top:707.00px">2023-02-25 10:06:23</div>
<div class="sw" style="left:1658px;top:706.00px"><span class="swl"></span><span class="swoff">OFF</span></div>
<div class="sw" style="left:1750px;top:706.00px"><span class="swl"></span><span class="swoff">OFF</span></div>
<div class="dots" style="left:1852.5px;top:708.00px"><svg width="4" height="12" viewBox="0 0 4 12"><rect x="0.3" y="0.4" width="3.2" height="3" fill="#52789a"/><rect x="0.3" y="4.6" width="3.2" height="3" fill="#52789a"/><rect x="0.3" y="8.8" width="3.2" height="3" fill="#52789a"/></svg></div><div class="rb" style="top:778.00px"></div>
<div class="t" style="left:266.5px;top:747.75px">218782</div>
<div class="avc" style="left:335px;top:753.25px"></div>
<div class="t" style="left:413.5px;top:747.75px">55777777</div>
<div class="t" style="left:531.5px;top:747.75px">777777</div>
<div class="t" style="left:615.0px;top:749.25px"><svg class="pen" width="13" height="13" viewBox="0 0 16 16"><path d="M1 15 L1.8 11.2 L4.8 14.2 Z M2.6 10.4 L10.6 2.4 L13.6 5.4 L5.6 13.4 Z M11.4 1.6 L12.6 0.4 Q13.2 -0.1 13.8 0.4 L15.6 2.2 Q16.1 2.8 15.6 3.4 L14.4 4.6 Z" fill="#4a7399"/></svg></div>
<div class="t" style="left:735px;top:747.75px">0/0</div>
<div class="t lk" style="left:1001px;top:747.75px">200.00</div>
<div class="t lk" style="left:1106px;top:747.75px">0</div>
<div class="t lk" style="left:1191px;top:747.75px">0</div>
<div class="t lk" style="left:1243.5px;top:747.75px">0</div>
<div class="t" style="left:1312.5px;top:747.75px">2023-02-25 10:00:49</div>
<div class="t" style="left:1468.5px;top:747.75px">2023-02-25 10:01:38</div>
<div class="sw" style="left:1658px;top:746.75px"><span class="swl"></span><span class="swoff">OFF</span></div>
<div class="sw" style="left:1750px;top:746.75px"><span class="swl"></span><span class="swoff">OFF</span></div>
<div class="dots" style="left:1852.5px;top:748.75px"><svg width="4" height="12" viewBox="0 0 4 12"><rect x="0.3" y="0.4" width="3.2" height="3" fill="#52789a"/><rect x="0.3" y="4.6" width="3.2" height="3" fill="#52789a"/><rect x="0.3" y="8.8" width="3.2" height="3" fill="#52789a"/></svg></div><div class="rb" style="top:818.75px"></div>
<div class="t" style="left:266.5px;top:788.50px">218780</div>
<div class="avc" style="left:335px;top:794.00px"></div>
<div class="t" style="left:413.5px;top:788.50px">55666666</div>
<div class="t" style="left:531.5px;top:788.50px">666666</div>
<div class="t" style="left:615.0px;top:790.00px"><svg class="pen" width="13" height="13" viewBox="0 0 16 16"><path d="M1 15 L1.8 11.2 L4.8 14.2 Z M2.6 10.4 L10.6 2.4 L13.6 5.4 L5.6 13.4 Z M11.4 1.6 L12.6 0.4 Q13.2 -0.1 13.8 0.4 L15.6 2.2 Q16.1 2.8 15.6 3.4 L14.4 4.6 Z" fill="#4a7399"/></svg></div>
<div class="t" style="left:735px;top:788.50px">0/0</div>
<div class="t lk" style="left:1001px;top:788.50px">0.00</div>
<div class="t lk" style="left:1106px;top:788.50px">0</div>
<div class="t lk" style="left:1191px;top:788.50px">0</div>
<div class="t lk" style="left:1243.5px;top:788.50px">0</div>
<div class="t" style="left:1312.5px;top:788.50px">2023-02-25 09:49:25</div>
<div class="t" style="left:1468.5px;top:788.50px">2023-02-25 09:50:34</div>
<div class="sw" style="left:1658px;top:787.50px"><span class="swl"></span><span class="swoff">OFF</span></div>
<div class="sw" style="left:1750px;top:787.50px"><span class="swl"></span><span class="swoff">OFF</span></div>
<div class="dots" style="left:1852.5px;top:789.50px"><svg width="4" height="12" viewBox="0 0 4 12"><rect x="0.3" y="0.4" width="3.2" height="3" fill="#52789a"/><rect x="0.3" y="4.6" width="3.2" height="3" fill="#52789a"/><rect x="0.3" y="8.8" width="3.2" height="3" fill="#52789a"/></svg></div><div class="rb" style="top:859.50px"></div>
<div class="t" style="left:266.5px;top:829.25px">218779</div>
<div class="avc" style="left:335px;top:834.75px"></div>
<div class="t" style="left:413.5px;top:829.25px">55445566</div>
<div class="t" style="left:531.5px;top:829.25px">12313</div>
<div class="t lk" style="left:616.5px;top:829.25px"><span class="ed">200<span class="cj">杀跳转</span></span></div>
<div class="t" style="left:735px;top:829.25px">0/7</div>
<div class="t lk" style="left:1001px;top:829.25px">48859.52</div>
<div class="t lk" style="left:1106px;top:829.25px">0</div>
<div class="t lk" style="left:1191px;top:829.25px">0</div>
<div class="t lk" style="left:1243.5px;top:829.25px">0</div>
<div class="t" style="left:1312.5px;top:829.25px">2023-01-30 10:27:53</div>
<div class="t" style="left:1468.5px;top:829.25px">2023-01-31 03:58:37</div>
<div class="sw" style="left:1658px;top:828.25px"><span class="swl"></span><span class="swoff">OFF</span></div>
<div class="sw" style="left:1750px;top:828.25px"><span class="swl"></span><span class="swoff">OFF</span></div>
<div class="dots" style="left:1852.5px;top:830.25px"><svg width="4" height="12" viewBox="0 0 4 12"><rect x="0.3" y="0.4" width="3.2" height="3" fill="#52789a"/><rect x="0.3" y="4.6" width="3.2" height="3" fill="#52789a"/><rect x="0.3" y="8.8" width="3.2" height="3" fill="#52789a"/></svg></div><div class="rb" style="top:900.25px"></div>
<div class="t" style="left:266.5px;top:870.00px">218769</div>
<div class="avc" style="left:335px;top:875.50px"></div>
<div class="t" style="left:413.5px;top:870.00px">55666555</div>
<div class="t" style="left:531.5px;top:870.00px">666555</div>
<div class="t lk" style="left:616.5px;top:870.00px"><span class="ed"><span class="cj">大杀</span></span></div>
<div class="t" style="left:735px;top:870.00px">2/7</div>
<div class="t lk" style="left:1001px;top:870.00px">488.78</div>
<div class="t lk" style="left:1106px;top:870.00px">0</div>
<div class="t lk" style="left:1191px;top:870.00px">0</div>
<div class="t lk" style="left:1243.5px;top:870.00px">0</div>
<div class="t" style="left:1312.5px;top:870.00px">2022-11-07 13:17:59</div>
<div class="t" style="left:1468.5px;top:870.00px">2022-11-08 12:08:54</div>
<div class="sw" style="left:1658px;top:869.00px"><span class="swl"></span><span class="swoff">OFF</span></div>
<div class="sw" style="left:1750px;top:869.00px"><span class="swl"></span><span class="swoff">OFF</span></div>
<div class="dots" style="left:1852.5px;top:871.00px"><svg width="4" height="12" viewBox="0 0 4 12"><rect x="0.3" y="0.4" width="3.2" height="3" fill="#52789a"/><rect x="0.3" y="4.6" width="3.2" height="3" fill="#52789a"/><rect x="0.3" y="8.8" width="3.2" height="3" fill="#52789a"/></svg></div><div class="rb" style="top:941.00px"></div>
<div class="t" style="left:266.5px;top:910.75px">218778</div>
<div class="avc" style="left:335px;top:916.25px"></div>
<div class="t" style="left:413.5px;top:910.75px">5522341</div>
<div class="t" style="left:531.5px;top:910.75px">15342342</div>
<div class="t lk" style="left:616.5px;top:910.75px"><span class="ed">G<span class="cj">组隐藏关</span></span></div>
<div class="t" style="left:735px;top:910.75px">1/1</div>
<div class="t lk" style="left:1001px;top:910.75px">15485.68</div>
<div class="t lk" style="left:1106px;top:910.75px">0</div>
<div class="t lk" style="left:1191px;top:910.75px">0</div>
<div class="t lk" style="left:1243.5px;top:910.75px">0</div>
<div class="t" style="left:1312.5px;top:910.75px">2022-11-07 16:53:29</div>
<div class="t" style="left:1468.5px;top:910.75px">2022-11-07 17:04:44</div>
<div class="sw" style="left:1658px;top:909.75px"><span class="swl"></span><span class="swoff">OFF</span></div>
<div class="sw" style="left:1750px;top:909.75px"><span class="swl"></span><span class="swoff">OFF</span></div>
<div class="dots" style="left:1852.5px;top:911.75px"><svg width="4" height="12" viewBox="0 0 4 12"><rect x="0.3" y="0.4" width="3.2" height="3" fill="#52789a"/><rect x="0.3" y="4.6" width="3.2" height="3" fill="#52789a"/><rect x="0.3" y="8.8" width="3.2" height="3" fill="#52789a"/></svg></div>
</body></html>
